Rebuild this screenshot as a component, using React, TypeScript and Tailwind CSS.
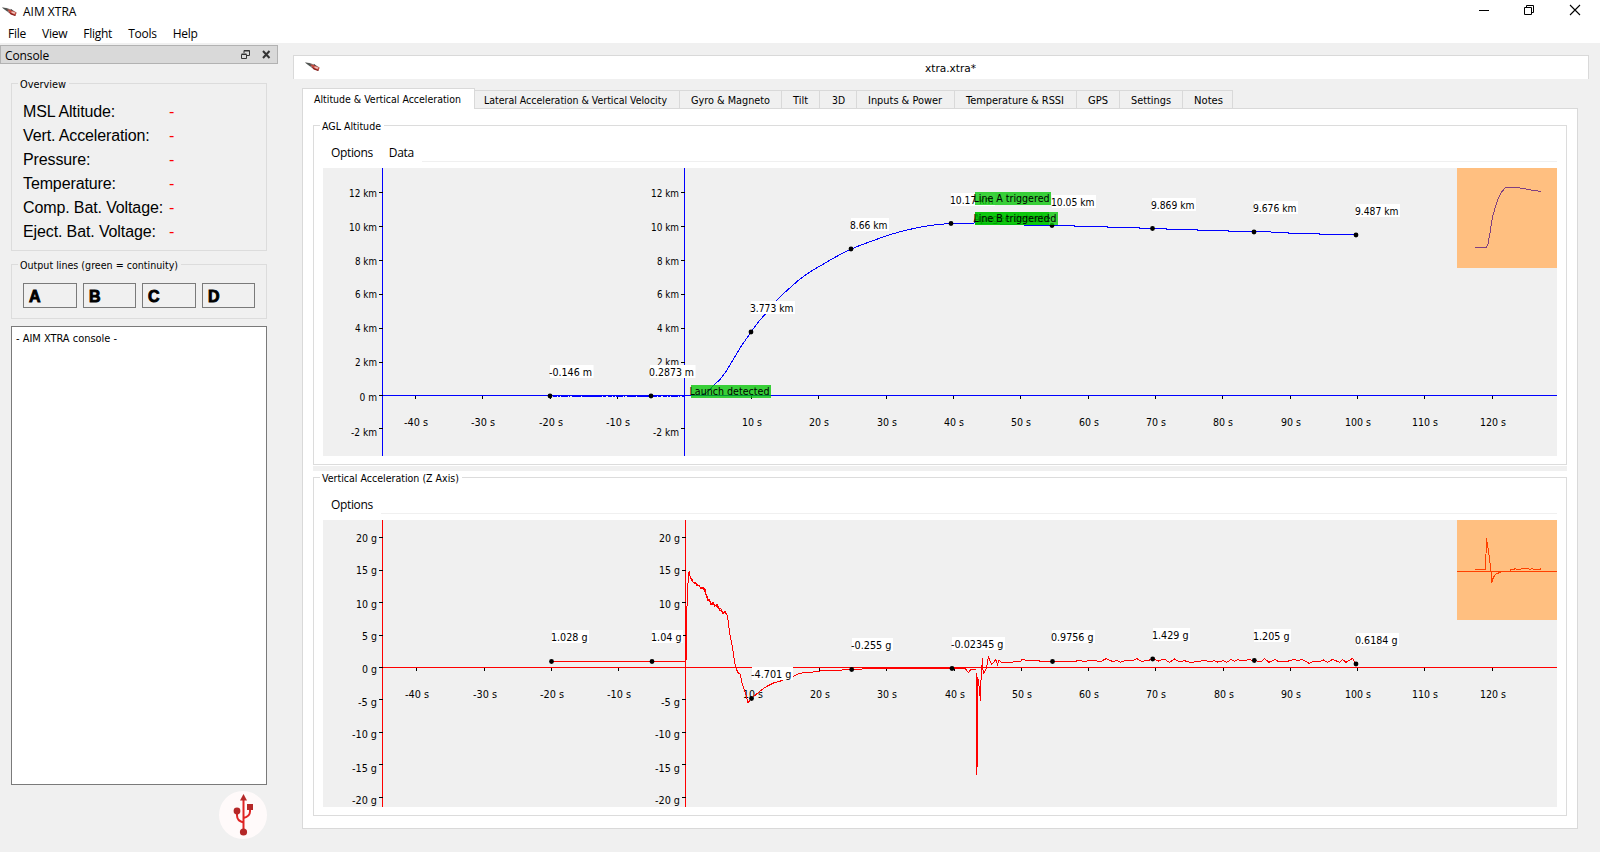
import clsx from 'clsx';

const UI = "font-['DejaVu_Sans_Condensed','Noto_Sans',sans-serif]";

// Advance widths of the 11px interface font
const ADVANCE: Record<string, number> = { ' ': 3, '.': 4, '-': 4, k: 4.5, m: 8.5, s: 5, g: 6 };
const measure = (text: string) => [...text].reduce((sum, c) => sum + (ADVANCE[c] ?? 6), 0);

const tabs = [
  { label: 'Lateral Acceleration & Vertical Velocity', width: 'w-[205px] pr-[3px]', text: 183 },
  { label: 'Gyro & Magneto', width: 'w-[102px]', text: 79 },
  { label: 'Tilt', width: 'w-[38px]', text: 15 },
  { label: '3D', width: 'w-[37px]', text: 13 },
  { label: 'Inputs & Power', width: 'w-[98px] pr-px', text: 74 },
  { label: 'Temperature & RSSI', width: 'w-[122px] pr-px', text: 98 },
  { label: 'GPS', width: 'w-[43px]', text: 20 },
  { label: 'Settings', width: 'w-[63px]', text: 40 },
  { label: 'Notes', width: 'w-[50px] pl-px', text: 29 },
];

const overview = [
  'MSL Altitude:',
  'Vert. Acceleration:',
  'Pressure:',
  'Temperature:',
  'Comp. Bat. Voltage:',
  'Eject. Bat. Voltage:',
];

const outputs = [
  { name: 'A', width: 'w-[54px]' },
  { name: 'B', width: 'w-[53px]' },
  { name: 'C', width: 'w-[54px]' },
  { name: 'D', width: 'w-[53px]' },
];

type Tick = [pos: number, label: string, baseline?: number];
type Sample = [x: number, y: number, label: string, boxX: number, boxY: number];

const altitudeY: Tick[] = [
  [192.5, '12 km', 197],
  [226.5, '10 km', 231],
  [260.5, '8 km', 265],
  [294.5, '6 km', 298],
  [328.5, '4 km', 332],
  [362.5, '2 km', 366],
  [395.5, '0 m', 401],
  [428.5, '-2 km', 436],
];

const altitudeX: Tick[] = [
  [415.5, '-40 s'],
  [482.5, '-30 s'],
  [550.5, '-20 s'],
  [617.5, '-10 s'],
  [751.5, '10 s'],
  [818.5, '20 s'],
  [886.5, '30 s'],
  [953.5, '40 s'],
  [1020.5, '50 s'],
  [1088.5, '60 s'],
  [1155.5, '70 s'],
  [1222.5, '80 s'],
  [1290.5, '90 s'],
  [1357.5, '100 s'],
  [1424.5, '110 s'],
  [1492.5, '120 s'],
];

const altitudeSamples: Sample[] = [
  [550, 396, '-0.146 m', 550, 365],
  [651, 396, '0.2873 m', 650, 365],
  [751, 332, '3.773 km', 751, 301],
  [851, 249, '8.66 km', 851, 218],
  [951, 223.5, '10.17 km', 951, 193],
  [1052, 225.5, '10.05 km', 1052, 195],
  [1152.5, 228.5, '9.869 km', 1152, 198],
  [1254, 232, '9.676 km', 1254, 201],
  [1356, 235, '9.487 km', 1356, 204],
];

const accelY: Tick[] = [
  [537.5, '20 g', 542],
  [570.5, '15 g', 574],
  [602.5, '10 g', 608],
  [635.5, '5 g', 640],
  [667.5, '0 g', 673],
  [699.5, '-5 g', 706],
  [732.5, '-10 g', 738],
  [764.5, '-15 g', 772],
  [797.5, '-20 g', 804],
];

const accelX: Tick[] = [
  [416.5, '-40 s'],
  [484.5, '-30 s'],
  [551.5, '-20 s'],
  [618.5, '-10 s'],
  [752.5, '10 s'],
  [819.5, '20 s'],
  [886.5, '30 s'],
  [954.5, '40 s'],
  [1021.5, '50 s'],
  [1088.5, '60 s'],
  [1155.5, '70 s'],
  [1223.5, '80 s'],
  [1290.5, '90 s'],
  [1357.5, '100 s'],
  [1424.5, '110 s'],
  [1492.5, '120 s'],
];

const accelSamples: Sample[] = [
  [551.5, 661.5, '1.028 g', 552, 630],
  [652, 661.5, '1.04 g', 652, 630],
  [751.5, 698.5, '-4.701 g', 752, 667],
  [851.7, 669.5, '-0.255 g', 852, 638],
  [952, 668.5, '-0.02345 g', 952, 637],
  [1052.5, 661.5, '0.9756 g', 1052, 630],
  [1152.7, 659, '1.429 g', 1153, 628],
  [1254.3, 660.5, '1.205 g', 1254, 629],
  [1356, 664, '0.6184 g', 1356, 633],
];

const altitudeCurve =
  '684,396 700,395.5 706,393 710,389.5 714,385 720,379.5 725,373 730,365 740,348 751,332 760,320 765,314.5 776.5,300.5 783,294 790.5,287.3 798,280.7 805,275.3 812,270.7 820,266 828,261.3 836.5,256.5 845,252 851,249.3 860,245.3 870,241.8 881.5,237.5 891.5,234.2 903,231 915,228.2 928,225.8 938,224.5 951,223.5 975,223 1000,224 1036,225.5 1074,225.5 1074,226.5 1107,226.5 1107,227.5 1139,227.5 1139,228.5 1166,228.5 1166,229.5 1197,229.5 1197,230.5 1228,230.5 1228,231.5 1254,231.5 1288,232.5 1288,233.5 1319,233.5 1319,234.5 1352,234.5 1356,235.5';

const accelCurve =
  '551,661.5 685.5,661.5 686.5,658 686.5,620 687.7,588 688.7,572.5 690,576 692,581 694,583 696.5,584 701.5,588 704.5,590 707.5,599 711.5,603.5 716.5,606 720,610.5 723.5,612.5 726.7,613.7 728,620 730,635 732.3,646 734.3,660 735.7,667.5 738,672.7 740.3,674 742.3,684 745.3,692.5 748,702.5 751.5,698.5 756,694.5 761.5,690 766.5,686.5 773.5,683 780.5,681 792.7,676.7 798,674 803.5,672.5 813,672 820,671 833,670.5 851.5,669.5 873,668.5 953,668.5 965,668.5 968.5,672.5 971,669 976,669 976.5,775 977.5,760 977.7,676.7 979.5,690 980.5,700.7 981,680 982.5,657.7 982.7,668 983.7,673 985.7,670 987.5,663 988.5,656 989.7,660 991.5,664.5 993.5,662.5 995.7,659.5 997.5,664.5 999,660 1001.7,662.5 1010,662.5 1016.7,661.5 1020,662 1022,659.5 1030,661 1038,660.7 1042,661.5 1075,661.5 1078,660.5 1085,661.5 1089,660.5 1096,660.7 1100,662 1106,658.7 1112.7,661.5 1117,660.5 1120.7,662.3 1125,660.5 1133,660.5 1136.7,658.5 1142.7,662 1145,660 1148,660.5 1152.7,659 1158.5,661 1164,659 1169.5,662.3 1174.5,659 1180,662 1184,660.5 1189.5,662.3 1198,661.7 1204,660.3 1210.7,662 1214,660.5 1217.5,662 1223,660.7 1226.7,662.3 1231,659.5 1234.5,661.3 1237.7,659.7 1241.7,661 1248.5,659.7 1254.5,660.5 1261,661.7 1264.5,658.5 1269,662.3 1274.7,659.5 1278.5,661.5 1287.5,661.3 1293.5,659.5 1298,660.5 1302.5,659.5 1309,663.3 1313.5,661.5 1318.5,662 1323.5,660 1327.7,662.3 1332.7,659.3 1339.5,662.3 1342.7,659.7 1346,662.3 1352.5,658.5 1355.7,663.5';

// Second pass over the boost phase, where sensor noise thickens the trace
const boostNoise =
  '689,571 690.5,578 692,579.5 693,582 695,582 697,585.5 699,585 701,589 703,587.5 705,589 706,594 707,596 708,601 709.5,600 711,604.5 713,602.5 714.5,606.5 717,604.5 719,608.500 721,609 723,614 725,611.5 726.500,615';

function Txt({ x, y, children, width }: { x: number; y: number; children: string; width?: number }) {
  return (
    <text x={x} y={y} textLength={width ?? measure(children)} lengthAdjust="spacingAndGlyphs" fontSize="11" className={UI}>
      {children}
    </text>
  );
}

/* One line of 11px interface text, fitted to its measured width */
function Caption({ children, width }: { children: string; width: number }) {
  return (
    <svg width={width} height="13" className="block shrink-0 overflow-visible">
      <Txt x={0} y={10.5} width={width}>
        {children}
      </Txt>
    </svg>
  );
}

function Rocket({ className }: { className?: string }) {
  return (
    <svg width="16" height="10" viewBox="0 0 16 10" className={className}>
      <path d="M0 .5 5 1l6 2.2 3.5 2.3-1 3.5L7 6z" fill="#8d8585" />
      <path d="M0 .6 4.5 1.2 8 3.4 5.2 4.2z" fill="#4d5450" />
      <path d="M5 2.6 9 3l5.5 2.7-1 2.6L9.500 7z" fill="#c9483c" />
      <path d="m9.500 4.2 4 1.2-1 1.6-3-1z" fill="#efc0ba" />
      <path d="m6.500 4.8 7 3.4-.4.9-4.4-1.6z" fill="#8a1d1a" />
      <path d="m8.500 1.8 2.6 1.6-1.6.2z" fill="#222" />
    </svg>
  );
}

interface ChartProps {
  top: number;
  height: number;
  color: string;
  axisX: [number, number];
  axisY: number;
  xBaseline: number;
  xTicks: Tick[];
  yTicks: Tick[];
  samples: Sample[];
  children: React.ReactNode;
  overlay: React.ReactNode;
}

function Chart({ top, height, color, axisX, axisY, xBaseline, xTicks, yTicks, samples, children, overlay }: ChartProps) {
  // Only the outer axis is labelled and ticked at zero
  const ticksFor = (ax: number) => yTicks.filter(([y]) => ax === axisX[0] || y !== axisY);

  return (
    <svg width="1234" height={height} viewBox={`323 ${top} 1234 ${height}`} className="block bg-[#f0f0f0]">
      {xTicks.map(([x, label]) => (
        <Txt key={label} x={x - measure(label) / 2 + 0.5} y={xBaseline}>
          {label}
        </Txt>
      ))}
      {axisX.map((ax) =>
        ticksFor(ax).map(([y, label, base]) => (
          <Txt key={label + ax} x={ax - 5.5 - measure(label)} y={base ?? y}>
            {label}
          </Txt>
        )),
      )}
      <g shapeRendering="crispEdges" fill="none">
        {axisX.map((ax) => (
          <path key={ax} d={`M${ax} ${top}v${height}`} stroke={color} />
        ))}
        <path d={`M${axisX[0]} ${axisY}H1557`} stroke={color} />
        {xTicks.map(([x]) => (
          <path key={x} d={`M${x} ${axisY}v3.5`} stroke="#000" />
        ))}
        {axisX.map((ax) => ticksFor(ax).map(([y]) => <path key={`${ax}-${y}`} d={`M${ax - 3.5} ${y}h3.5`} stroke="#000" />))}
        {children}
      </g>
      {samples.map(([x, y, label, bx, by]) => (
        <g key={label}>
          <circle cx={x} cy={y} r="2.4" />
          <rect x={bx} y={by} width={measure(label)} height="13" fill="#fff" />
          <Txt x={bx - 1} y={by + 11} width={measure(label) - 0.5}>
            {label}
          </Txt>
        </g>
      ))}
      {overlay}
    </svg>
  );
}

function Event({ x, y, width, label, text }: { x: number; y: number; width: number; label: string; text: number }) {
  return (
    <>
      <rect x={x} y={y} width={width} height="13" fill="#00c400" fillOpacity=".77" />
      <Txt x={x - 1.5} y={y + 10} width={text}>
        {label}
      </Txt>
    </>
  );
}

function Panel({ title, titleWidth, menu, className, children }: {
  title: string;
  titleWidth: number;
  menu: string[];
  className: string;
  children: React.ReactNode;
}) {
  return (
    <fieldset className={clsx('border border-[#dcdcdc] px-[9px]', className)}>
      <legend className="-ml-[3px] h-[13px] pl-[2px] pr-[3px]">
        <Caption width={titleWidth}>{title}</Caption>
      </legend>
      <div className="mb-[6px] flex h-[30px]">
        {menu.map((item) => (
          <span key={item} className="px-2 pt-3 font-['Open_Sans',sans-serif] text-xs/[18px] tracking-[-0.35px]">
            {item}
          </span>
        ))}
        <span className="flex-1 border-b border-[#f0f0f0]" />
      </div>
      {children}
    </fieldset>
  );
}

export default function App() {
  return (
    <div className="h-[852px] w-[1600px] overflow-hidden bg-[#f0f0f0] text-black">
      {/* Title bar and menu */}
      <header className="h-[43px] bg-white font-['Open_Sans',sans-serif] text-xs">
        <div className="flex h-[23px] items-center">
          <Rocket className="ml-[2px]" />
          <span className="ml-[5px] flex-1 tracking-[0px]">AIM XTRA</span>
          <svg width="102" height="12" viewBox="0 0 102 12" className="mr-[19px] mb-[3px]" fill="none" stroke="#000">
            <path d="M0 6.500h10" />
            <path d="M45.500 3.500h7v7h-7zM47.500 3.500v-2h7v7h-2" />
            <path d="m91 1 10 10m0-10L91 11" strokeWidth="1.1" />
          </svg>
        </div>
        <nav className="flex gap-4 pl-2 text-xs/[22px] tracking-[-0.25px]">
          <span>File</span>
          <span>View</span>
          <span>Flight</span>
          <span>Tools</span>
          <span>Help</span>
        </nav>
      </header>

      <div className="flex">
        {/* Console dock */}
        <aside className="flex w-[278px] flex-col pt-[2px]">
          <div className="flex h-[19px] items-center border border-[#b2b2b2] bg-[#d9d9d9] pl-1 pr-[6px]">
            <span className="flex-1 pt-[2px] font-['Open_Sans',sans-serif] text-xs/[17px] tracking-[-0.1px]">Console</span>
            <svg width="30" height="9" viewBox="0 0 30 9" fill="none" stroke="#333">
              <path d="M.5 4.500h5v4h-5zM.5 4h5M3 3V.5h5.500v5H6M3 1h5.500" />
              <path d="m22 1 6.500 7M28.500 1 22 8" strokeWidth="2" />
            </svg>
          </div>

          <fieldset className="ml-[11px] mt-[13px] h-[174px] w-[256px] border border-[#dcdcdc] pl-[11px]">
            <legend className="-ml-[5px] h-[13px] pl-[2px] pr-[3px]">
              <Caption width={46}>Overview</Caption>
            </legend>
            <div className="pt-[10px] font-['Liberation_Sans',sans-serif] text-base/6">
              {overview.map((label) => (
                <div key={label} className="flex">
                  <span className="w-[146px] whitespace-nowrap tracking-[-0.12px]">{label}</span>
                  <span className="text-[#f00]">-</span>
                </div>
              ))}
            </div>
          </fieldset>

          <fieldset className="ml-[11px] mt-[7px] h-[61px] w-[256px] border border-[#dcdcdc] pl-[11px]">
            <legend className="-ml-[5px] h-[13px] pl-[2px] pr-[3px]">
              <Caption width={158}>Output lines (green = continuity)</Caption>
            </legend>
            <div className="flex gap-[6px] pt-3">
              {outputs.map(({ name, width }) => (
                <div
                  key={name}
                  className={clsx(
                    "h-[25px] border border-[#7a7a7a] pl-[5px] font-['Liberation_Sans',sans-serif] text-base/[26px] font-bold [-webkit-text-stroke:0.9px_#000]",
                    width,
                  )}
                >
                  {name}
                </div>
              ))}
            </div>
          </fieldset>

          <div className="ml-[11px] mt-[7px] h-[459px] w-[256px] border border-[#7a7a7a] bg-white pl-1 pt-1">
            <Caption width={101}>- AIM XTRA console -</Caption>
          </div>

          <svg width="48" height="48" viewBox="0 0 48 48" className="mr-[11px] mt-[6px] self-end" fill="none">
            <circle cx="24" cy="24" r="24" fill="#fffafa" />
            <path d="M24.500 8v33M24.500 31.500c-4-1-6.500-3.500-6.500-7V20M24.500 27c4-1 6.500-3 6.500-6.500V17" stroke="#e02424" strokeWidth="2" />
            <path d="m24.500 3 3.500 6.500h-7z" fill="#b52828" />
            <circle cx="18" cy="20" r="3.400" fill="#b52828" />
            <path d="M28 13h6v6h-6z" fill="#b52828" />
            <circle cx="24.500" cy="41" r="3.600" fill="#b52828" />
          </svg>
        </aside>

        {/* Document window */}
        <main className="ml-[15px] w-[1296px] pt-3">
          <div className="flex h-6 items-center border-x border-t border-[#d9d9d9] bg-white pl-[11px]">
            <Rocket className="mb-[2px]" />
            <div className="flex flex-1 justify-center pr-2">
              <Caption width={51}>xtra.xtra*</Caption>
            </div>
          </div>

          <div className="ml-[9px] mt-[9px] flex items-end">
            <div className="relative -mb-px h-[21px] w-[173px] border-x border-t border-[#d9d9d9] bg-white pl-[11px] pt-[3px]">
              <Caption width={147}>Altitude & Vertical Acceleration</Caption>
            </div>
            {tabs.map((tab) => (
              <div key={tab.label} className={clsx('flex h-[18px] justify-center border-r border-t border-[#d9d9d9] pt-[2px]', tab.width)}>
                <Caption width={tab.text}>{tab.label}</Caption>
              </div>
            ))}
          </div>

          <div className="ml-[9px] h-[721px] w-[1276px] border border-[#d9d9d9] bg-white px-[10px] pt-[10px]">
            <Panel title="AGL Altitude" titleWidth={59} menu={['Options', 'Data']} className="h-[346px]">
              <Chart
                top={168}
                height={288}
                color="#00f"
                axisX={[382.5, 684.5]}
                axisY={395.5}
                xBaseline={426}
                xTicks={altitudeX}
                yTicks={altitudeY}
                samples={altitudeSamples}
                overlay={
                  <>
                    <Event x={691} y={385} width={80} label="Launch detected" text={80} />
                    <Event x={975} y={192} width={76} label="Line A triggered" text={76} />
                    <Event x={975} y={212} width={83} label="Apogee detected" text={83} />
                    <Event x={975} y={212} width={74} label="Line B triggered" text={76} />
                    <rect x="1457" y="168" width="100" height="100" fill="#ffbf80" />
                    <polyline
                      points="1475,247.5 1486,247.5 1488,244 1490,233 1492.3,218 1495,208 1498,199 1501.7,192 1505.5,187.5 1516,187.5 1523,188.5 1531,190 1541,191.5"
                      fill="none"
                      stroke="#803f80"
                      shapeRendering="crispEdges"
                    />
                  </>
                }
              >
                <path d="M553 396.500h131" stroke="#00f" strokeDasharray="4 1 2 1 7 1 1 2 9 1 20 1 3 2" />
                <polyline points={altitudeCurve} stroke="#00f" />
              </Chart>
            </Panel>

            <div className="mt-px h-[5px] bg-[#f0f0f0]" />

            <Panel title="Vertical Acceleration (Z Axis)" titleWidth={137} menu={['Options']} className="h-[345px]">
              <Chart
                top={520}
                height={287}
                color="#f00"
                axisX={[382.5, 685.5]}
                axisY={667.5}
                xBaseline={698}
                xTicks={accelX}
                yTicks={accelY}
                samples={accelSamples}
                overlay={
                  <g fill="none" stroke="#ff4000" shapeRendering="crispEdges">
                    <rect x="1457" y="520" width="100" height="100" fill="#ffbf80" stroke="none" />
                    <path d="M1457 571.500h100" />
                    <polyline points="1475,569.5 1485.5,569.5 1486.5,538.5 1488,548 1489.7,560 1491,572 1491.7,582.5 1493.5,577 1496,574 1501,572 1510.5,571.5 1510.5,569.5 1514,569.5 1515,568.5 1517,569.5 1520,569.5 1522,568.5 1528,568.5 1530,569.5 1532,568.5 1534,569.5 1540,569.5 1541,568.5" />
                  </g>
                }
              >
                <polyline points={accelCurve} stroke="#f00" />
                <polyline points={boostNoise} stroke="#f00" />
              </Chart>
            </Panel>
          </div>
        </main>
      </div>
    </div>
  );
}
